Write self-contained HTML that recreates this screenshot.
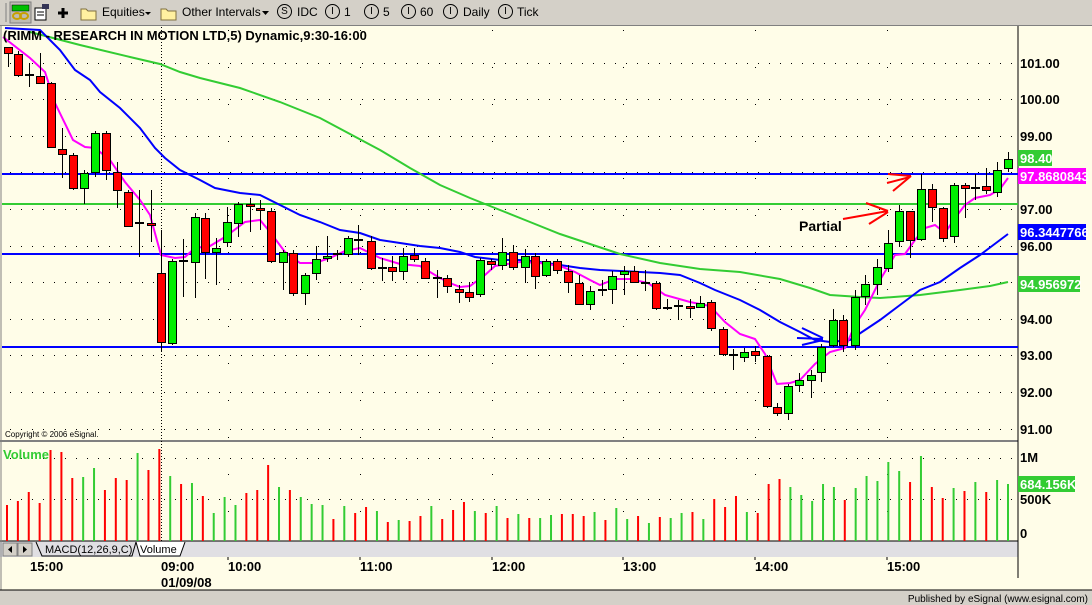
<!DOCTYPE html>
<html><head><meta charset="utf-8"><style>
*{margin:0;padding:0}
body{width:1092px;height:605px;overflow:hidden;background:#fffde8;font-family:"Liberation Sans",sans-serif;position:relative}
.tb{position:absolute;left:0;top:0;width:1092px;height:25px;background:#d4d0c8;border-bottom:1px solid #808080;font-size:12px}
.tb span{position:absolute;top:5px}
.circ{display:inline-block;width:13px;height:13px;border:1px solid #000;border-radius:50%;font-size:10px;text-align:center;line-height:13px;top:4px!important}
</style></head><body>
<div class="tb">
<svg style="position:absolute;left:0;top:0" width="200" height="25">
<line x1="6" y1="3" x2="6" y2="22" stroke="#808080"/>
<rect x="10" y="2" width="21" height="21" fill="#bfbcb4" stroke="#808080"/>
<rect x="12" y="5" width="17" height="6" fill="#00c000" stroke="#000" stroke-width=".5"/>
<ellipse cx="17" cy="16" rx="4" ry="3" fill="none" stroke="#c8a000" stroke-width="2"/>
<ellipse cx="24" cy="16" rx="4" ry="3" fill="none" stroke="#c8a000" stroke-width="2"/>
<rect x="35" y="8" width="11" height="12" fill="#fff" stroke="#000"/>
<line x1="37" y1="12" x2="44" y2="12" stroke="#000"/><line x1="37" y1="15" x2="44" y2="15" stroke="#000"/>
<rect x="42" y="4" width="7" height="5" fill="#335" />
<path d="M58 13h10M63 8v10" stroke="#000" stroke-width="3"/>
<path d="M81 9h5l2 2h8v9h-15z" fill="#fff0a0" stroke="#807040"/>
<path d="M145 12l3 3 3-3z" fill="#000"/>
<path d="M161 9h5l2 2h8v9h-15z" fill="#fff0a0" stroke="#807040"/>
</svg>
<span style="left:102px">Equities</span>
<span style="left:182px">Other Intervals</span>
<svg style="position:absolute;left:262px;top:11px" width="8" height="5"><path d="M0 0h7l-3.5 4z"/></svg>
<span class="circ" style="left:277px">S</span><span style="left:297px">IDC</span>
<span class="circ" style="left:325px">I</span><span style="left:344px">1</span>
<span class="circ" style="left:364px">I</span><span style="left:383px">5</span>
<span class="circ" style="left:401px">I</span><span style="left:420px">60</span>
<span class="circ" style="left:443px">I</span><span style="left:463px">Daily</span>
<span class="circ" style="left:498px">I</span><span style="left:517px">Tick</span>
</div>
<svg id="ch" style="position:absolute;left:0;top:0" width="1092" height="605">
<rect x="0" y="541" width="1018" height="16" fill="#e0dfe3"/>
<line x1="0" y1="541" x2="1018" y2="541" stroke="#000"/>
<line x1="0" y1="441" x2="1018" y2="441" stroke="#808080" stroke-width="2"/>
<line x1="1" y1="26" x2="1" y2="590" stroke="#808080"/>
<line x1="1018" y1="26" x2="1018" y2="578" stroke="#000"/>
<rect x="0" y="590" width="1092" height="15" fill="#d4d0c8"/>
<line x1="0" y1="590" x2="1092" y2="590" stroke="#000"/>
<g id="grid"></g>
<g stroke-width="2" fill="none">
<line x1="2" y1="174" x2="1018" y2="174" stroke="#0000ff"/>
<line x1="2" y1="204" x2="1018" y2="204" stroke="#33cc33"/>
<line x1="2" y1="254" x2="1018" y2="254" stroke="#0000ff"/>
<line x1="2" y1="347" x2="1018" y2="347" stroke="#0000ff"/>
<polyline stroke="#33cc33" points="30,32 80,45 130,57 160,64 180,72 200,78 240,88 280,102 320,118 350,134 380,150 410,168 440,185 470,198 500,210 530,222 560,234 590,244 620,254 660,263 700,269 740,272 780,279 810,288 830,295 860,297 880,298 920,295 960,290 990,286 1008,282"/>
<polyline stroke="#0000ff" points="5,28 40,30 60,50 75,70 90,80 100,92 120,108 140,128 155,148 165,158 180,170 200,180 215,188 240,193 260,195 280,205 300,215 320,222 340,230 360,233 380,240 400,243 420,246 440,248 460,252 475,257 500,260 520,260 540,262 560,265 580,268 600,270 640,272 660,273 680,275 700,283 715,290 740,300 760,310 780,322 800,332 815,340 830,342 850,340 865,330 880,320 900,305 920,290 940,282 960,268 980,255 1000,240 1008,234"/>
<polyline stroke="#ff00ff" points="3,37 30,58 45,72 55,103 73,140 85,147 95,148 110,160 125,182 140,200 150,215 161,255 175,258 185,257 195,248 210,246 225,237 245,222 260,220 270,232 285,252 300,263 315,263 330,258 345,251 360,248 380,258 400,264 420,266 440,278 450,283 460,287 470,286 485,275 495,266 520,262 540,263 560,266 575,272 590,280 600,285 615,279 630,279 648,283 665,295 690,302 710,306 725,322 740,334 755,339 765,354 777,384 790,383 800,380 815,364 830,352 845,348 855,325 865,310 880,280 895,255 905,254 915,240 925,228 935,225 945,233 955,218 965,205 975,198 990,195 1000,189 1008,178"/>
</g>
<g id="cd"></g><g id="vol"></g>
<g stroke="#ff0000" stroke-width="2"><path d="M843 219L888 211M866 203L888 211M869 224L888 212M888 174L911 176M893 191L911 176M887 183L910 177"/></g>
<g stroke="#0000ff" stroke-width="2"><path d="M802 328L823 338M797 338L823 339M802 345L823 340"/></g>
<text x="799" y="231" font-size="14" font-weight="bold">Partial</text>
<text x="3" y="40" font-size="13" font-weight="bold">(RIMM - RESEARCH IN MOTION LTD,5) Dynamic,9:30-16:00</text>
<text x="5" y="437" font-size="8">Copyright © 2006 eSignal.</text>
<text x="3" y="459" font-size="13" font-weight="bold" fill="#33cc33">Volume</text>
<g font-size="13" font-weight="bold">
<text x="1020" y="68">101.00</text><text x="1020" y="104">100.00</text><text x="1020" y="141">99.00</text>
<text x="1020" y="214">97.00</text><text x="1020" y="251">96.00</text><text x="1020" y="324">94.00</text>
<text x="1020" y="360">93.00</text><text x="1020" y="397">92.00</text><text x="1020" y="434">91.00</text>
<rect x="1018" y="150" width="34" height="16" fill="#33cc33"/><text x="1020" y="163" fill="#fff">98.40</text>
<rect x="1018" y="168" width="68" height="16" fill="#ff00ff"/><text x="1020" y="181" fill="#fff">97.8680843</text>
<rect x="1018" y="224" width="68" height="16" fill="#0000ff"/><text x="1020" y="237" fill="#fff">96.3447766</text>
<rect x="1018" y="276" width="62" height="16" fill="#33cc33"/><text x="1020" y="289" fill="#fff">94.956972</text>
<text x="1020" y="462">1M</text>
<rect x="1018" y="476" width="57" height="16" fill="#33cc33"/><text x="1020" y="489" fill="#fff">684.156K</text>
<text x="1020" y="504">500K</text><text x="1020" y="538">0</text>
<text x="30" y="571">15:00</text><text x="161" y="571">09:00</text><text x="161" y="587">01/09/08</text>
<text x="228" y="571">10:00</text><text x="360" y="571">11:00</text><text x="492" y="571">12:00</text>
<text x="623" y="571">13:00</text><text x="755" y="571">14:00</text><text x="887" y="571">15:00</text>
</g>
<g>
<rect x="3" y="543" width="14" height="13" fill="#d4d0c8" stroke="#808080"/><path d="M12 546v7l-4-3.5z"/>
<rect x="18" y="543" width="14" height="13" fill="#d4d0c8" stroke="#808080"/><path d="M23 546v7l4-3.5z"/>
<path d="M36 542l6 14h90l4-14" fill="#e0dfe3" stroke="#000"/>
<path d="M136 542l4 14h40l5-14" fill="#fff" stroke="#000"/>
<text x="45" y="553" font-size="11">MACD(12,26,9,C)</text>
<text x="140" y="553" font-size="11">Volume</text>
</g>
<text x="1088" y="602" font-size="10" text-anchor="end">Published by eSignal (www.esignal.com)</text>
</svg>
<script>
var NS="http://www.w3.org/2000/svg";
function el(p,t,a){var e=document.createElementNS(NS,t);for(var k in a)e.setAttribute(k,a[k]);p.appendChild(e);return e;}
var g=document.getElementById('grid');
[63,99,136,172,209,246,282,319,355,392,429,458,499].forEach(function(y){for(var x=10;x<1015;x+=11)el(g,'rect',{x:x,y:y,width:1,height:1,fill:'#000'});});
[228,360,492,623,755,887].forEach(function(x){for(var y=30;y<540;y+=37)el(g,'rect',{x:x,y:y,width:1,height:1,fill:'#000'});el(g,'line',{x1:x,y1:557,x2:x,y2:560,stroke:'#000'});});
for(var y=27;y<557;y+=3)el(g,'rect',{x:161,y:y,width:1,height:1,fill:'#000'});
var C=[[8,47,53,'r',47,67],[18,54,75,'r',51,77],[29,75,75,'d',63,87],[40,76,83,'r',53,84],[51,83,147,'r',82,148],[62,149,154,'r',128,178],[73,155,188,'r',153,190],[84,173,188,'g',170,204],[95,133,172,'g',131,177],[106,133,170,'r',131,180],[117,172,190,'r',162,208],[128,192,226,'r',190,227],[139,223,223,'d',190,257],[151,223,225,'r',190,242],[161,273,342,'r',230,351],[172,261,343,'g',259,345],[183,261,261,'d',239,297],[195,217,262,'g',213,298],[205,218,252,'r',213,279],[216,248,252,'g',238,285],[227,222,242,'g',207,247],[238,204,223,'g',202,237],[250,204,206,'r',198,232],[260,208,210,'r',200,230],[271,211,261,'r',208,263],[283,252,262,'g',250,290],[293,253,293,'r',250,296],[305,275,293,'g',273,305],[316,259,273,'g',246,280],[327,256,258,'g',236,262],[337,254,254,'d',250,260],[348,238,254,'g',236,257],[358,240,240,'d',225,255],[371,241,268,'r',236,270],[382,268,268,'d',258,281],[392,267,271,'r',256,281],[403,256,271,'g',248,280],[414,255,259,'r',248,262],[425,261,278,'r',258,279],[437,278,278,'d',270,298],[447,278,286,'r',275,293],[459,289,292,'r',285,303],[469,292,297,'r',282,302],[480,260,294,'g',258,297],[491,261,264,'r',259,270],[502,252,265,'g',238,270],[513,252,267,'r',245,270],[525,256,267,'g',249,283],[535,256,276,'r',253,289],[546,261,275,'g',259,277],[557,261,270,'r',259,274],[568,271,282,'r',265,293],[579,283,304,'r',275,305],[590,291,304,'g',286,310],[602,290,290,'d',280,296],[612,276,289,'g',271,304],[624,271,274,'g',266,295],[634,271,282,'r',266,283],[645,283,283,'d',270,291],[656,283,308,'r',281,310],[667,308,308,'d',299,310],[678,306,306,'d',300,320],[690,306,308,'r',299,318],[700,303,307,'g',296,308],[711,302,328,'r',300,331],[723,329,354,'r',327,356],[733,355,355,'d',349,370],[744,352,357,'g',348,362],[755,351,355,'r',346,362],[767,356,406,'r',355,408],[777,407,413,'r',403,416],[788,386,413,'g',384,420],[799,380,385,'g',373,392],[811,375,380,'g',370,398],[821,347,372,'g',344,382],[833,320,345,'g',309,347],[843,320,345,'r',315,352],[855,297,345,'g',290,350],[865,284,296,'g',275,305],[877,267,284,'g',259,295],[888,243,268,'g',230,272],[899,211,241,'g',205,247],[910,211,240,'r',211,258],[921,189,239,'g',174,241],[932,189,207,'r',184,222],[943,208,238,'r',207,242],[954,185,236,'g',183,243],[965,185,188,'r',183,218],[975,188,188,'d',174,200],[986,186,190,'r',168,194],[997,170,192,'g',162,197],[1008,159,168,'g',152,172]];
var cd=document.getElementById('cd');
C.forEach(function(c){var x=c[0];
el(cd,'line',{x1:x+.5,y1:c[4],x2:x+.5,y2:c[5],stroke:'#000'});
if(c[3]=='d')el(cd,'line',{x1:x-4,y1:c[1],x2:x+5,y2:c[1],stroke:'#000','stroke-width':2});
else el(cd,'rect',{x:x-3.5,y:c[1]+.5,width:8,height:Math.max(2,c[2]-c[1]),fill:c[3]=='r'?'#ff0000':'#00ee00',stroke:'#000'});});
var V=[505,'r',501,'r',492,'r',503,'r',450,'r',452,'r',478,'r',477,'g',468,'g',490,'r',478,'r',480,'r',453,'g',470,'r',449,'r',476,'g',484,'r',483,'g',496,'r',513,'g',497,'g',505,'g',493,'r',490,'r',465,'r',487,'g',490,'r',497,'g',504,'g',505,'g',519,'r',506,'g',513,'r',507,'r',511,'g',522,'r',520,'g',521,'r',516,'r',506,'g',519,'r',510,'r',502,'r',511,'g',513,'r',506,'g',518,'r',514,'g',518,'r',518,'g',515,'g',514,'r',514,'r',516,'r',512,'g',520,'r',508,'g',519,'g',516,'r',523,'g',517,'r',518,'g',513,'g',512,'r',519,'g',499,'r',507,'r',496,'r',512,'g',513,'r',484,'r',479,'r',487,'g',495,'g',501,'g',484,'g',487,'g',500,'r',488,'g',476,'g',481,'g',462,'g',471,'g',482,'r',456,'g',487,'r',498,'r',488,'g',491,'r',482,'g',492,'r',480,'g',484,'g'];
var vg=document.getElementById('vol'),n=V.length/2;
for(var i=0;i<n;i++){var x=7+i*(1008-7)/(n-1);el(vg,'rect',{x:x-1,y:V[2*i],width:2,height:541-V[2*i],fill:V[2*i+1]=='r'?'#ff0000':'#33cc33'});}
</script>
</body></html>
